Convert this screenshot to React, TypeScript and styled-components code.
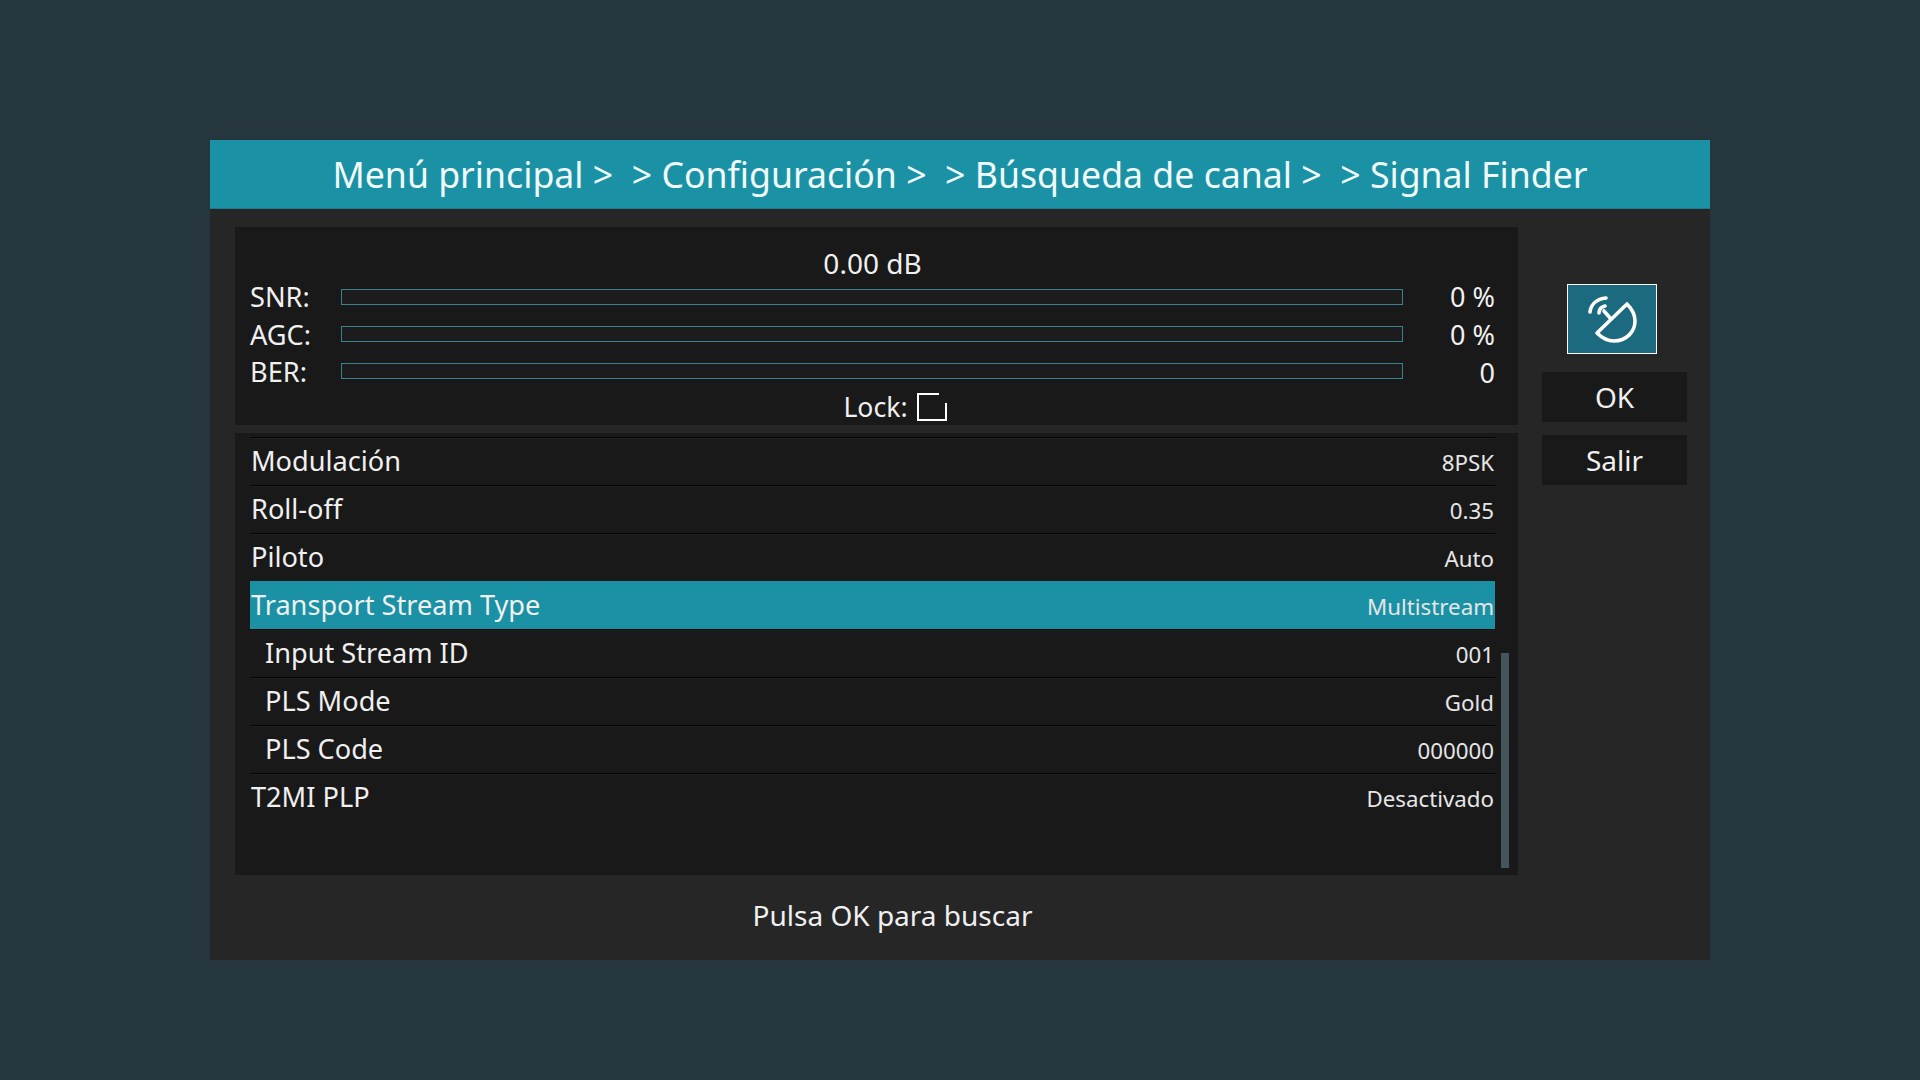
import styled, { createGlobalStyle } from "styled-components";

const GlobalStyle = createGlobalStyle`
  html, body {
    margin: 0;
    padding: 0;
    height: 100%;
    background: #25363e;
  }
  * {
    box-sizing: border-box;
  }
`;

const Screen = styled.div`
  width: 1920px;
  height: 1080px;
  padding-top: 140px;
  display: flex;
  justify-content: center;
  align-items: flex-start;
  font-family: "Noto Sans", sans-serif;
  color: #f0f0f0;
`;

const Dialog = styled.div`
  width: 1500px;
  height: 820px;
  background: #262626;
  display: flex;
  flex-direction: column;
`;

const Header = styled.div`
  height: 69px;
  background: #1a91a5;
  border-bottom: 1px solid #1b7c8f;
  display: flex;
  align-items: center;
  justify-content: center;
  font-size: 35.66px;
  color: #f0fbfb;
  white-space: pre;
`;

const Body = styled.div`
  display: flex;
  padding: 18px 0 0 25px;
`;

const Left = styled.div`
  width: 1283px;
  display: flex;
  flex-direction: column;
  gap: 8px;
`;

const SignalPanel = styled.div`
  height: 198px;
  background: #191919;
  padding: 18px 23px 0 15px;
`;

const DbLine = styled.div`
  height: 33px;
  line-height: 37px;
  text-align: center;
  font-size: 28px;
`;

const SignalRow = styled.div`
  height: 37px;
  display: grid;
  grid-template-columns: 91px 1062px 1fr;
  grid-template-rows: 37px;
  align-items: center;
`;

const SignalLabel = styled.span<{ $drop: number }>`
  font-size: 27.2px;
  line-height: 30px;
  padding-top: ${(p) => p.$drop}px;
`;

const Bar = styled.div`
  height: 16px;
  border: 1px solid #3b7f90;
  background: #1c1c1c;
`;

const SignalValue = styled.span<{ $drop: number }>`
  text-align: right;
  font-size: 27px;
  line-height: 30px;
  padding-top: ${(p) => p.$drop}px;
`;

const LockRow = styled.div`
  height: 36px;
  padding-left: 45px;
  display: flex;
  justify-content: center;
  align-items: center;
  gap: 9px;
  font-size: 26.6px;
`;

const ListPanel = styled.div`
  position: relative;
  height: 442px;
  background: #191919;
  padding: 4px 23px 0 15px;
`;

const Row = styled.div<{ $active?: boolean; $sub?: boolean }>`
  height: 48px;
  padding-left: ${(p) => (p.$sub ? "15px" : "1px")};
  padding-right: 1px;
  display: flex;
  align-items: center;
  justify-content: space-between;
  background: ${(p) => (p.$active ? "#1a91a5" : "transparent")};
  border-top: 1px solid ${(p) => (p.$active ? "transparent" : "#050505")};
  box-shadow: ${(p) => (p.$active ? "none" : "inset 0 1px 0 #202020")};
`;

const RowLabel = styled.span`
  font-size: 27.15px;
  padding-bottom: 2px;
`;

const RowValue = styled.span`
  font-size: 22.3px;
  color: #e6e6e6;
  padding-top: 2px;
`;

const Scrollbar = styled.div`
  position: absolute;
  left: 1266px;
  top: 220px;
  width: 8px;
  height: 215px;
  background: #45555c;
`;

const Side = styled.div`
  margin-left: 24px;
  padding-top: 57px;
  display: flex;
  flex-direction: column;
`;

const IconTile = styled.div`
  width: 90px;
  height: 70px;
  margin: 0 0 18px 25px;
  background: #1b6a7f;
  border: 1px solid #fff;
  display: flex;
`;

const SideButton = styled.div`
  width: 145px;
  height: 50px;
  margin-bottom: 13px;
  background: #191919;
  display: flex;
  align-items: center;
  justify-content: center;
  font-size: 28px;
`;

const Footer = styled.div`
  width: 1365px;
  margin-top: 21px;
  text-align: center;
  font-size: 28px;
`;

const signals = [
  { label: "SNR:", value: "0 %", labelDrop: 0, valueDrop: 0 },
  { label: "AGC:", value: "0 %", labelDrop: 2, valueDrop: 2 },
  { label: "BER:", value: "0", labelDrop: 3, valueDrop: 5 },
];

const rows = [
  { label: "Modulación", value: "8PSK" },
  { label: "Roll-off", value: "0.35" },
  { label: "Piloto", value: "Auto" },
  { label: "Transport Stream Type", value: "Multistream", active: true },
  { label: "Input Stream ID", value: "001", sub: true },
  { label: "PLS Mode", value: "Gold", sub: true },
  { label: "PLS Code", value: "000000", sub: true },
  { label: "T2MI PLP", value: "Desactivado" },
];

const DishIcon = () => (
  <svg width="88" height="68" viewBox="1 1 88 68" fill="none" stroke="#fff" strokeWidth="3.6" strokeLinecap="round" strokeLinejoin="round">
    <path d="M60 20 L30 49 C36 55 41 57 47 57 C59 57 68 48 68 37 C68 30 65 25 60 20 Z" />
    <path d="M37 27 L44 35" />
    <path d="M23 28 C24 20 30 15 39 14" />
    <path d="M32 29 C32 25 34 23 38 22" />
  </svg>
);

const LockBox = () => (
  <svg width="30" height="28" viewBox="0 0 30 28" fill="none" stroke="#fff" strokeWidth="2">
    <path d="M22 1 H1 V27 H29 V10" />
  </svg>
);

export default function App() {
  return (
    <Screen>
      <GlobalStyle />
      <Dialog>
        <Header>{"Menú principal >  > Configuración >  > Búsqueda de canal >  > Signal Finder"}</Header>
        <Body>
          <Left>
            <SignalPanel>
              <DbLine>0.00 dB</DbLine>
              {signals.map((s) => (
                <SignalRow key={s.label}>
                  <SignalLabel $drop={s.labelDrop}>{s.label}</SignalLabel>
                  <Bar />
                  <SignalValue $drop={s.valueDrop}>{s.value}</SignalValue>
                </SignalRow>
              ))}
              <LockRow>
                <span>Lock:</span>
                <LockBox />
              </LockRow>
            </SignalPanel>
            <ListPanel>
              {rows.map((r) => (
                <Row key={r.label} $active={r.active} $sub={r.sub}>
                  <RowLabel>{r.label}</RowLabel>
                  <RowValue>{r.value}</RowValue>
                </Row>
              ))}
              <Scrollbar />
            </ListPanel>
          </Left>
          <Side>
            <IconTile>
              <DishIcon />
            </IconTile>
            <SideButton>OK</SideButton>
            <SideButton>Salir</SideButton>
          </Side>
        </Body>
        <Footer>Pulsa OK para buscar</Footer>
      </Dialog>
    </Screen>
  );
}
